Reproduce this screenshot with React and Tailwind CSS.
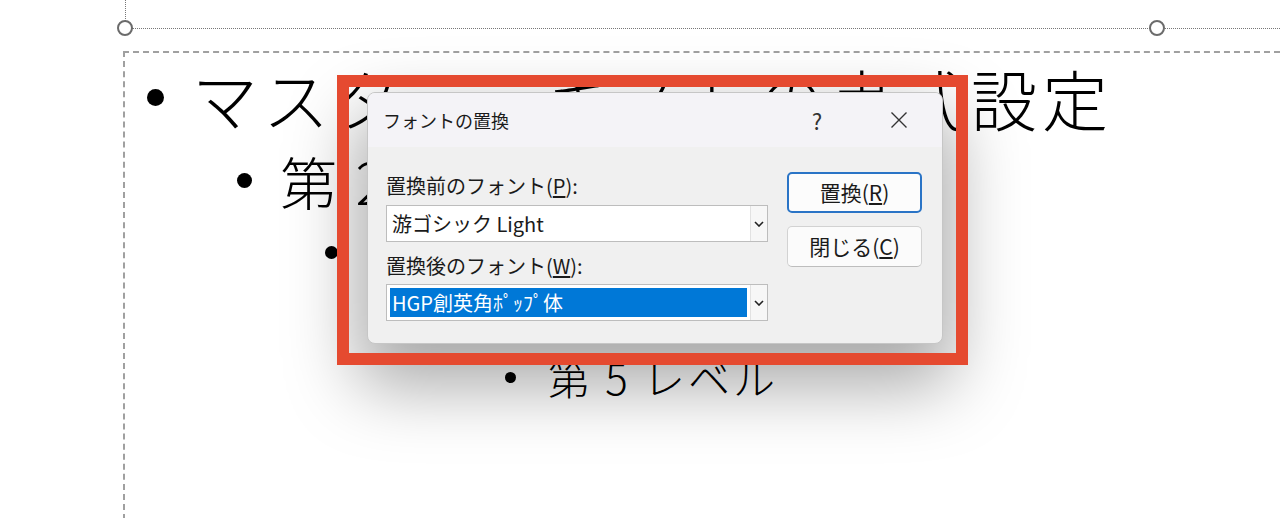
import React from 'react';

const jp = { fontFamily: '"Noto Sans CJK JP", "Noto Sans", sans-serif' };

const Chevron = () => (
  <svg width="10" height="6" viewBox="0 0 10 6" fill="none">
    <path d="M1 1l4 4 4-4" stroke="#222" strokeWidth="1.6" />
  </svg>
);

const Combo = ({ value, selected }) => (
  <div className="flex h-[37px] w-[382px] items-stretch border border-[#bdbdbd] bg-white">
    <div className="flex flex-1 items-center p-[3px]">
      <div
        className={
          selected
            ? 'flex h-full w-full items-center bg-[#0078d7] pl-[2px] text-white'
            : 'flex h-full w-full items-center pl-[2px] text-[#1a1a1a]'
        }
      >
        {value}
      </div>
    </div>
    <div className="flex w-[17px] items-center justify-center border-l border-[#e2e2e2] bg-[#f7f7f7]">
      <Chevron />
    </div>
  </div>
);

const Row = ({ h, pl, dot, gap, size, children }) => (
  <div className={`flex items-center ${h} ${pl}`}>
    <span className={`shrink-0 rounded-full bg-black ${dot}`} />
    <span className={`whitespace-nowrap leading-none font-light text-black ${gap} ${size}`}>{children}</span>
  </div>
);

export default function App() {
  return (
    <div className="relative h-[518px] w-[1280px] overflow-hidden bg-white" style={jp}>
      {/* selection edge with handles */}
      <div className="absolute left-[125px] top-0 h-[21px] border-l border-dotted border-[#777]" />
      <div className="absolute left-[132px] right-0 top-[28px] border-t border-dotted border-[#777]" />
      <div className="absolute left-[117px] top-[20px] h-[16px] w-[16px] rounded-full border-2 border-[#6b6b6b] bg-white" />
      <div className="absolute left-[1149px] top-[20px] h-[16px] w-[16px] rounded-full border-2 border-[#6b6b6b] bg-white" />

      {/* body placeholder */}
      <div className="ml-[123px] mt-[51px] h-[600px] border-l-2 border-t-2 border-dashed border-[#a0a0a0]">
        <Row h="h-[88px]" pl="pl-[22px]" dot="h-[17px] w-[17px]" gap="ml-[28px]" size="text-[66px] tracking-[5px]">
          マスターテキストの書式設定
        </Row>
        <Row h="h-[78px]" pl="pl-[112px]" dot="h-[15px] w-[15px]" gap="ml-[28px]" size="text-[57px] tracking-[3px]">
          第 2 レベル
        </Row>
        <Row h="h-[66px]" pl="pl-[200px]" dot="h-[13px] w-[13px]" gap="ml-[30px]" size="text-[47px] tracking-[2px]">
          第 3 レベル
        </Row>
        <Row h="h-[60px]" pl="pl-[290px]" dot="h-[11px] w-[11px]" gap="ml-[32px]" size="text-[42px] tracking-[2px]">
          第 4 レベル
        </Row>
        <Row h="h-[64px]" pl="pl-[380px]" dot="h-[11px] w-[11px]" gap="ml-[32px]" size="text-[42px] tracking-[3px]">
          第 5 レベル
        </Row>
      </div>

      {/* dialog */}
      <div className="absolute left-[367px] top-[92px] w-[576px] overflow-hidden rounded-[8px] border border-[#c6c6c6] bg-[#f0f0f0] shadow-[0_32px_70px_10px_rgba(0,0,0,0.34)]">
        <div className="flex h-[54px] items-center bg-[#f4f3f7] pl-[15px] pr-[31px] text-[18px] text-[#1a1a1a]">
          <span>フォントの置換</span>
          <span className="ml-auto w-[24px] text-center text-[22px] text-[#333]">?</span>
          <span className="ml-[58px] flex w-[24px] justify-center">
            <svg width="18" height="18" viewBox="0 0 18 18">
              <path d="M1.5 1.5l15 15M16.5 1.5l-15 15" stroke="#333" strokeWidth="1.4" />
            </svg>
          </span>
        </div>
        <div className="flex gap-[19px] pb-[22px] pl-[18px] pr-[20px] pt-[25px] text-[20px] text-[#1a1a1a]">
          <div className="flex w-[382px] flex-col">
            <div className="h-[28px] leading-[28px]">
              置換前のフォント(<span className="underline underline-offset-2">P</span>):
            </div>
            <div className="mt-[5px]">
              <Combo value="游ゴシック Light" />
            </div>
            <div className="mt-[10px] h-[28px] leading-[28px]">
              置換後のフォント(<span className="underline underline-offset-2">W</span>):
            </div>
            <div className="mt-[4px]">
              <Combo value="HGP創英角ﾎﾟｯﾌﾟ体" selected />
            </div>
          </div>
          <div className="flex w-[135px] flex-col gap-[13px] text-[21px]">
            <button className="h-[41px] rounded-[5px] border-2 border-[#2a74c6] bg-[#fcfcfc] text-[#1a1a1a]">
              置換(<span className="underline underline-offset-2">R</span>)
            </button>
            <button className="h-[41px] rounded-[5px] border border-[#d2d2d2] border-b-[#bdbdbd] bg-[#fbfbfb] text-[#1a1a1a]">
              閉じる(<span className="underline underline-offset-2">C</span>)
            </button>
          </div>
        </div>
      </div>

      {/* callout frame */}
      <div className="absolute left-[337px] top-[75px] h-[290px] w-[631px] border-[12px] border-[#e54a30]" />
    </div>
  );
}
